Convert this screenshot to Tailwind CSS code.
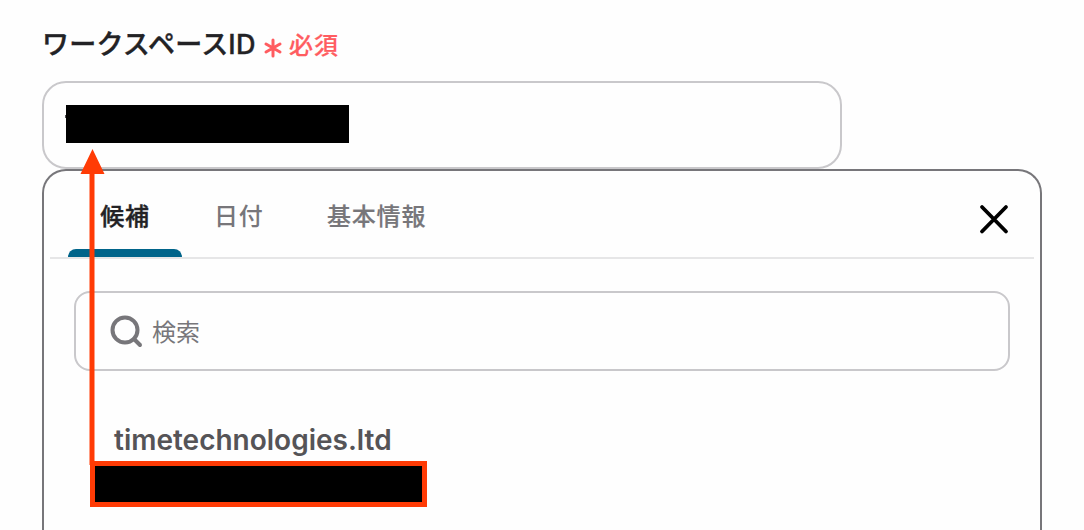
<!DOCTYPE html>
<html lang="ja">

<head>
    <meta charset="UTF-8">
    <meta name="viewport" content="width=device-width, initial-scale=1.0">
    <title>ワークスペースID</title>
    <script src="https://cdn.jsdelivr.net/npm/@tailwindcss/browser@4"></script>
</head>

<body class="relative h-[530px] overflow-hidden bg-[#fefefe] font-['Inter','Noto_Sans_CJK_JP',sans-serif]">
    <div class="flex h-[530px] flex-col pl-[42px] pt-6">
        <label for="workspaceId" class="mb-[17px] flex h-10 shrink-0 items-center">
            <span class="mt-0.5 w-[216px] whitespace-nowrap text-[27px] font-medium tracking-[0.2px] text-[#222225] [-webkit-text-stroke:0.4px]">ワークスペースID</span>
            <svg class="ml-[5px] mt-2 size-5" viewBox="0 0 20 20" fill="none" stroke="#ff5c60" stroke-width="3" stroke-linecap="round">
                <path d="M10 2v16M3 6l14 8M17 6L3 14" />
            </svg>
            <span class="ml-1.5 mt-1 text-2xl font-medium tracking-[1px] text-[#ff5c60] [-webkit-text-stroke:0.2px]">必須</span>
        </label>

        <div id="workspaceId" class="flex h-[88px] w-[800px] shrink-0 items-center rounded-3xl border-2 border-[#c9c8cb] px-[22px]">
            <div class="relative mb-0.5 h-[38px] w-[283px] bg-black">
                <span class="absolute -left-px top-2.5 h-[3px] w-px bg-[#555457]"></span>
            </div>
        </div>

        <div class="min-h-0 w-[1000px] flex-1 rounded-t-3xl border-2 border-b-0 border-[#77767a]">
            <div class="mx-1.5 flex h-[88px] justify-between border-b-2 border-[#e6e6e7] pl-[18px] pr-6">
                <div class="flex text-2xl font-medium tracking-[0.8px] text-[#77767a]">
                    <button class="flex w-[114px] flex-col items-center text-[#222225] [-webkit-text-stroke:0.4px]">
                        <span class="flex h-[78px] items-center pt-3.5">候補</span>
                        <span class="h-2 w-full rounded-t-lg bg-[#00648a]"></span>
                    </button>
                    <button class="flex h-[78px] w-[113px] items-center pl-8 pt-3.5">日付</button>
                    <button class="flex h-[78px] items-center px-8 pt-3.5 [-webkit-text-stroke:0.2px]">基本情報</button>
                </div>
                <button class="pt-2.5">
                    <svg class="size-8" viewBox="0 0 32 32" fill="none" stroke="#000" stroke-width="3.8" stroke-linecap="round">
                        <path d="M4 4l24 24.500M28 4L4 28.500" />
                    </svg>
                </button>
            </div>

            <div class="mx-[30px] mt-8 flex h-20 items-center rounded-2xl border-2 border-[#c9c8cb] pl-8">
                <svg class="size-9" viewBox="0 0 36 36" fill="none" stroke="#77767a" stroke-width="4" stroke-linecap="round">
                    <circle cx="17" cy="17" r="12.500" />
                    <path d="M26 26l6 6" />
                </svg>
                <span class="ml-2 mt-1 text-2xl text-[#77767a]">検索</span>
            </div>

            <div class="pl-[70px] pt-[49px] text-[28px] font-semibold leading-10 text-[#555457]">timetechnologies.ltd</div>
        </div>
    </div>

    <!-- callout: highlighted value and arrow up to the field -->
    <div class="absolute left-[90px] top-[461px] h-[46px] w-[337px] border-[5px] border-[#ff3b05] bg-black"></div>
    <svg class="absolute left-[80px] top-[149px] h-[316px] w-[25px]" viewBox="0 0 25 316" fill="#ff3b05">
        <path d="M12.500 0L24.500 25H14.500v291h-5V25H0.500z" />
    </svg>
</body>

</html>
